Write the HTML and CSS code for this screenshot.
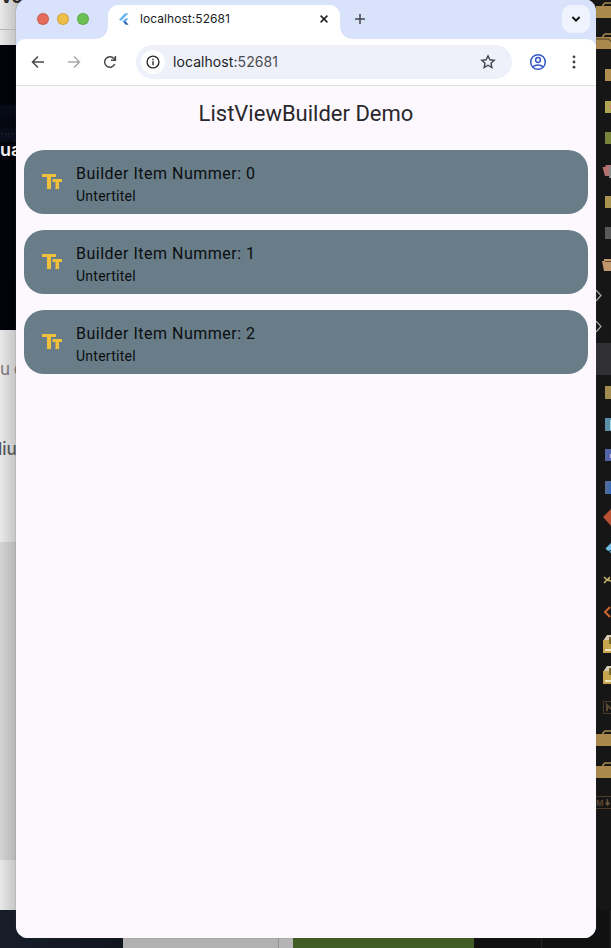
FILE: index.html
```html
<!DOCTYPE html>
<html lang="de">
<head>
<meta charset="utf-8">
<title>ListViewBuilder Demo</title>
<link rel="stylesheet" href="styles.css">
</head>
<body>
<div class="desktop">
  <div class="left-strip">
    <div class="strip strip-head"><span>vo</span></div>
    <div class="strip strip-bar"></div>
    <div class="strip strip-dark"><i>7317</i><b>ua</b></div>
    <div class="strip strip-text"><span>u e</span><span class="strong">liu</span></div>
    <div class="strip strip-gray"></div>
    <div class="strip strip-light"></div>
  </div>
  <svg class="right-strip" width="15" height="948" viewBox="596 0 15 948">
    <defs>
      <g id="case"><path d="M603 5V3l2-2h6" fill="none" stroke="#a78953" stroke-width="1.6"/><path d="M596 4h15v12h-15z" fill="#aa894d"/></g>
      <g id="box"><path d="M603 7l4-6h4v7h-8z" fill="#d4cbb4"/><path d="M603 6h8v13h-8z" fill="#c5a54e"/><path d="M609 3h2v7h-2z" fill="#77672d"/><path d="M605 15h6v2h-6z" fill="#eee4bd"/></g>
    </defs>
    <path fill="#161616" d="M596 0h15v948h-15z"/>
    <use href="#case" y="2"/>
    <use href="#case" y="33"/>
    <path d="M596 39h13l1 2h1" stroke="#4c3d27" fill="none"/>
    <path fill="#b08e4e" d="M605 69h6v12h-6z"/>
    <path fill="#aea653" d="M605 101h6v12h-6z"/><path d="M610 105h1v4h-1z" fill="#d67973"/>
    <path fill="#77843a" d="M605 132h6v12h-6z"/>
    <path fill="#b3706c" d="M602.500 167h3v-2h5.500v11h-6z"/><path fill="#858585" d="M609 166h2v12h-2z"/>
    <path fill="#a99250" d="M605 196h6v12h-6z"/>
    <path fill="#595959" d="M605 227h6v12h-6z"/>
    <path fill="#c2966c" d="M602 261h2v-2h7v12h-7z"/><path d="M605 261.500h6" stroke="#60462d"/>
    <path d="M596 290l5 5.500-5 5.500M596 321l5 5.500-5 5.500" fill="none" stroke="#aaa" stroke-width="1.200"/>
    <path fill="#302f34" d="M596 343h15v32h-15z"/>
    <path fill="#a28b4e" d="M605 386h6v13h-6z"/>
    <path fill="#5c8fa7" d="M605 418h6v13h-6z"/><path d="M610 420h1v10h-1z" fill="#9fd4e1"/>
    <path fill="#5365a6" d="M605 449h6v12h-6z"/><path d="M610 454h1v4h-1z" fill="#b2b4e1"/>
    <path fill="#516c9b" d="M605 481h6v13h-6z"/><path d="M609 483h2v11h-2z" fill="#326bbb"/>
    <path fill="#b85034" d="M603 517l8-8v17z"/>
    <path d="M605.500 548.500l5.500-5.500v7l-3 1z" fill="#70bde5"/><path d="M609 551.500l2-1v3z" fill="#4c8eb5"/>
    <path d="M604 577l3 3 3-2M604 583l6-6M607 580l4 1" stroke="#c5b36c" stroke-width="1.500" fill="none"/>
    <path d="M610 607l-5 5 5 5" fill="none" stroke="#cf6632" stroke-width="2"/>
    <use href="#box" y="634"/><use href="#box" y="665"/>
    <path d="M612 701.500h-8.500v12h8.500" fill="none" stroke="#493c2a"/><path d="M607 711v-6l4 4" fill="none" stroke="#5b4931" stroke-width="2"/>
    <use href="#case" y="730"/><use href="#case" y="762"/>
    <path d="M596 796.500h15M596 808.500h15" stroke="#493c2a"/><text x="596" y="806" class="md">M</text><path d="M607.500 799v6m-2-2.500l2 2.500 2-2.500" stroke="#68543a" stroke-width="1.500" fill="none"/>
  </svg>
  <div class="bottom-strip"><i class="navy"></i><i class="silver"></i><i class="silver2"></i><i class="green"></i><i class="ink"></i><i class="ink"></i></div>

  <main class="window">
    <header class="tabs">
      <div class="lights"><i class="red"></i><i class="yellow"></i><i class="lime"></i></div>
      <div class="tab">
        <svg width="12" height="14" viewBox="0 0 12 14"><path d="M0 7.500L6 1.300h3.500L2 9z" fill="#67b7f1"/><path d="M3.500 9.500L6.500 6.500h3L6.500 9.500l-1.600 1.500z" fill="#55a5e7"/><path d="M4.900 10.500l1.700-1.300L9.500 12.700H6.800z" fill="#27569c"/></svg>
        <span>localhost:52681</span>
        <svg class="close" width="8" height="8" viewBox="0 0 8 8"><path d="M.6.6l6.800 6.800M7.400.6L.6 7.400" stroke="#202124" stroke-width="1.500"/></svg>
      </div>
      <svg class="plus" width="12" height="12" viewBox="0 0 12 12"><path d="M6 1v10M1 6h10" stroke="#414449" stroke-width="1.500"/></svg>
      <div class="chevron"><svg width="10" height="8" viewBox="0 0 10 8"><path d="M1.400 2L5 5.600 8.600 2" fill="none" stroke="#111" stroke-width="1.900"/></svg></div>
    </header>
    <nav class="toolbar">
      <svg width="14" height="14" viewBox="0 0 14 14"><path d="M13 7H2M7 1.500L1.500 7 7 12.500" fill="none" stroke="#45484b" stroke-width="1.500"/></svg>
      <svg class="forward" width="14" height="14" viewBox="0 0 14 14"><path d="M1 7h11M7 1.500L12.500 7 7 12.500" fill="none" stroke="#a9a9ab" stroke-width="1.500"/></svg>
      <svg class="reload" width="14" height="14" viewBox="0 0 14 14"><path d="M11.800 9A5.300 5.300 0 1 1 11 3.600L12.300 5M12.400 1v4.300H8" fill="none" stroke="#45484b" stroke-width="1.500"/></svg>
      <div class="address">
        <div class="info"><svg width="14" height="14" viewBox="0 0 14 14"><circle cx="7" cy="7" r="5.900" fill="none" stroke="#292a2c" stroke-width="1.400"/><path d="M7 6.300v4M7 3.700v1.500" stroke="#292a2c" stroke-width="1.400"/></svg></div>
        <span>localhost:<em>52681</em></span>
        <svg class="star" width="16" height="16" viewBox="0 0 16 16"><path d="M8 1.800l1.850 4 4.350.45-3.250 2.950.95 4.300L8 11.250 4.100 13.500l.95-4.300L1.800 6.250l4.350-.45z" fill="none" stroke="#45484b" stroke-width="1.400"/></svg>
      </div>
      <svg class="profile" width="18" height="18" viewBox="0 0 18 18" fill="none" stroke="#345ac4" stroke-width="1.500"><circle cx="9" cy="9" r="7.300"/><circle cx="9" cy="7" r="2.400"/><path d="M3.800 14c2.700-2.800 7.700-2.800 10.400 0"/></svg>
      <svg class="more" width="4" height="16" viewBox="0 0 4 16" fill="#3e4145"><circle cx="2" cy="2.800" r="1.400"/><circle cx="2" cy="8" r="1.400"/><circle cx="2" cy="13.200" r="1.400"/></svg>
    </nav>
    <section class="page">
      <h1>ListViewBuilder Demo</h1>
      <div class="list">
        <article><svg width="24" height="24" viewBox="0 0 24 24"><path d="M2 4v3h5v12h4V7h5V4z M22 9h-9.500v3h3v7h3.500v-7h3z"/></svg><div><h2>Builder Item Nummer: 0</h2><p>Untertitel</p></div></article>
        <article><svg width="24" height="24" viewBox="0 0 24 24"><path d="M2 4v3h5v12h4V7h5V4z M22 9h-9.500v3h3v7h3.500v-7h3z"/></svg><div><h2>Builder Item Nummer: 1</h2><p>Untertitel</p></div></article>
        <article><svg width="24" height="24" viewBox="0 0 24 24"><path d="M2 4v3h5v12h4V7h5V4z M22 9h-9.500v3h3v7h3.500v-7h3z"/></svg><div><h2>Builder Item Nummer: 2</h2><p>Untertitel</p></div></article>
      </div>
    </section>
  </main>
</div>
</body>
</html>
```

FILE: styles.css
```css
* { box-sizing: border-box; }
body { margin: 0; }
h1, h2, p { margin: 0; font-weight: 400; }
svg { display: block; flex: none; }
.desktop { position: relative; width: 611px; height: 948px; overflow: hidden; background: #161616; font-family: Inter, sans-serif; }
.left-strip { position: absolute; left: 0; top: 0; width: 30px; }
.strip { overflow: hidden; white-space: nowrap; background: linear-gradient(90deg, #e9e9e9, #c5c5c5 16px); }
.strip-head { height: 30px; border-bottom: 1px solid #b5b5b5; font-size: 18px; font-weight: 700; line-height: 18px; color: #292929; }
.strip-head span { display: block; margin: -12px 0 0 1px; }
.strip-bar { height: 15px; }
.strip-dark { height: 285px; background: linear-gradient(#02030a 0 60px, #070b1a 61px, #03040b 92px, #02030a); color: #eee; }
.strip-dark i { display: block; margin-top: 83px; height: 14px; font: 7px/14px "Liberation Serif", serif; color: #252a3a; background: #080b18; }
.strip-dark b { display: block; font-size: 18px; line-height: 22px; font-weight: 600; margin-top: -3px; }
.strip-text { height: 212px; font-size: 17px; color: #777; }
.strip-text span { display: block; line-height: 20px; margin-top: 29px; word-spacing: -1px; }
.strip-text .strong { color: #555; font-weight: 500; margin: 60px 0 0 -2px; }
.strip-gray { height: 318px; background: linear-gradient(90deg, #d4d4d4, #b5b5b5 16px); }
.strip-light { height: 50px; }
.right-strip { position: absolute; left: 596px; top: 0; }
.md { font: 700 9px "Liberation Sans", sans-serif; fill: #5b4931; }
.bottom-strip { position: absolute; left: 0; top: 910px; width: 611px; height: 38px; display: grid; grid-template-columns: 123px 156px 14px 181px 68px 1fr; }
.navy { background: linear-gradient(90deg, #171e2a, #10151e); }
.silver { background: #b1b1b1; border-right: 1px solid #929292; }
.silver2 { background: #b5b5b5; }
.green { background: #415c24; }
.ink { background: #111; border-right: 1px solid #242424; }
.window { position: absolute; left: 16px; top: -1px; width: 580px; height: 939px; border-radius: 12px; overflow: hidden; background: #d9e2fb; box-shadow: 0 0 1px #555; display: flex; flex-direction: column; }
.tabs { height: 40px; padding: 6px 6px 0 21px; display: flex; }
.lights { width: 71px; display: flex; gap: 8px; padding-top: 8px; }
.lights i { width: 12px; height: 12px; border-radius: 50%; border: 1px solid #0002; }
.red { background: #e76b5c; }
.yellow { background: #efbd49; }
.lime { background: #6bc253; }
.tab { position: relative; width: 232px; height: 34px; border-radius: 10px 10px 0 0; background: #fff; display: flex; align-items: flex-start; padding: 7px 12px 0 11px; color: #202124; }
.tab::before, .tab::after { content: ""; position: absolute; bottom: 0; width: 12px; height: 12px; }
.tab::before { right: 100%; background: radial-gradient(circle at 0 0, #0000 11.500px, #fff 12px); }
.tab::after { left: 100%; background: radial-gradient(circle at 100% 0, #0000 11.500px, #fff 12px); }
.tab span { margin-left: 9px; font-size: 12px; line-height: 14px; letter-spacing: .06px; }
.close { margin: 3px 0 0 auto; }
.plus { margin: 8px 0 0 14px; }
.chevron { margin-left: auto; width: 28px; height: 28px; border-radius: 9px; background: #eff3fe; display: grid; place-items: center; }
.toolbar { height: 47px; flex: none; border-radius: 9px 9px 0 0; border-bottom: 1px solid #dedde0; background: #fff; display: flex; align-items: center; padding: 0 20px 0 15px; }
.forward { margin-left: 22px; }
.reload { margin-left: 22px; }
.address { width: 376px; height: 34px; margin-left: 19px; border-radius: 17px; background: #eff1fa; display: flex; align-items: center; padding: 0 16px 0 5px; font-size: 14px; letter-spacing: .07px; color: #202124; }
.address span { margin-top: -1px; }
.address em { font-style: normal; color: #4b4e52; }
.info { width: 24px; height: 24px; margin-right: 8px; border-radius: 50%; background: #fff; display: grid; place-items: center; }
.star { margin-left: auto; }
.profile { margin-left: 17px; }
.more { margin-left: auto; }
.page { flex: 1; background: #fdf8fe; font-family: Roboto, sans-serif; }
.page h1 { height: 56px; line-height: 55px; font-size: 22px; text-align: center; color: #29272c; }
.list { padding: 8px; display: grid; gap: 16px; }
.list article { height: 64px; border-radius: 20px; background: #697d89; padding: 0 16px; display: flex; align-items: center; gap: 12px; }
.list article svg { fill: #f0bf3c; }
.list article div { padding-top: 4px; }
.list h2 { font-size: 16px; line-height: 24px; letter-spacing: .5px; color: #0b0d0f; }
.list p { font-size: 14px; line-height: 20px; letter-spacing: .25px; color: #0b0d0f; }
```
